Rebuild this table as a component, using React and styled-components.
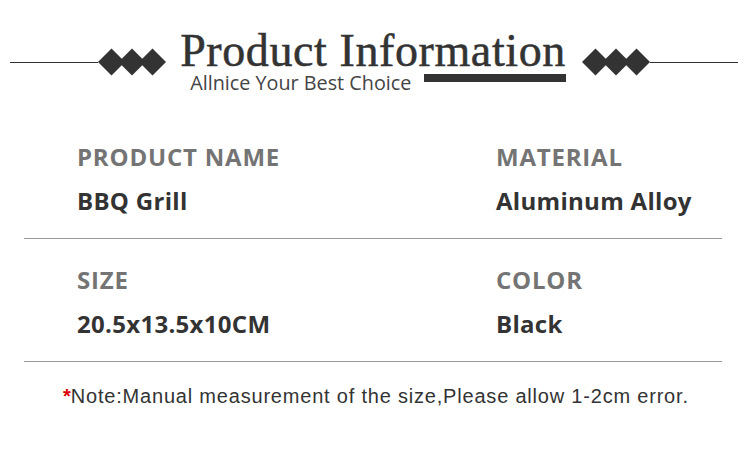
import React from "react";
import styled, { createGlobalStyle } from "styled-components";

const Global = createGlobalStyle`
  html, body {
    margin: 0;
    padding: 0;
    background: #fff;
  }
`;

const Page = styled.div`
  width: 750px;
  height: 449px;
  background: #fff;
  overflow: hidden;
`;

const Header = styled.header`
  display: flex;
  align-items: flex-start;
  padding: 30px 12px 0 10px;
  height: 102px;
  box-sizing: border-box;
`;

const Rule = styled.div`
  flex: 1 1 auto;
  height: 1px;
  margin-top: 32px;
  background: #333;
`;

const Diamonds = styled.svg`
  display: block;
  flex: 0 0 auto;
  margin: 18px ${(p) => (p.$side === "left" ? "14px 0 0" : "0 0 1px")};
`;

const TitleBlock = styled.div`
  display: flex;
  flex-direction: column;
  margin: 0 15px 0 0;
`;

const Title = styled.h1`
  margin: 0;
  font-family: "Liberation Serif", "Times New Roman", serif;
  font-weight: 400;
  font-size: 46px;
  line-height: 42px;
  letter-spacing: 0.6px;
  color: #333;
  -webkit-text-stroke: 0.5px #333;
  white-space: nowrap;
`;

const SubRow = styled.div`
  display: flex;
  align-items: flex-start;
  gap: 13px;
  padding-left: 10px;
`;

const Subtitle = styled.p`
  margin: 0;
  font-family: "Open Sans", "Noto Sans", sans-serif;
  font-size: 19.8px;
  line-height: 22px;
  color: #444;
  white-space: nowrap;
`;

const Bar = styled.div`
  flex: 1 1 auto;
  height: 8px;
  margin-top: 2px;
  background: #333;
`;

const Table = styled.section`
  margin: 0 28px 0 24px;
`;

const Row = styled.div`
  display: grid;
  grid-template-columns: 419px 1fr;
  padding: 39px 0 21px 53px;
  border-bottom: 1px solid #999;
  & + & {
    padding-top: 25px;
  }
`;

const Cell = styled.div`
  display: flex;
  flex-direction: column;
  gap: 12px;
`;

const Label = styled.div`
  font-family: "Open Sans", "Noto Sans", sans-serif;
  font-weight: 700;
  font-size: 24px;
  line-height: 32px;
  letter-spacing: 0.8px;
  color: #747474;
  white-space: nowrap;
`;

const Value = styled.div`
  font-family: "Open Sans", "Noto Sans", sans-serif;
  font-weight: 700;
  font-size: 24px;
  line-height: 32px;
  letter-spacing: 0.3px;
  color: #333;
  white-space: nowrap;
`;

const Note = styled.p`
  margin: 22px 0 0 63px;
  font-family: "Liberation Sans", Arial, sans-serif;
  font-size: 20px;
  line-height: 24px;
  letter-spacing: 0.8px;
  color: #333;
  white-space: nowrap;
`;

const Star = styled.span`
  color: #d00;
  font-weight: 700;
  letter-spacing: 0;
`;

const DiamondIcon = ({ side }) => (
  <Diamonds $side={side} width="68" height="28" viewBox="0 0 68 28">
    {[13.5, 34, 54.5].map((cx) => (
      <polygon
        key={cx}
        points={`${cx},0.5 ${cx + 13.5},14 ${cx},27.5 ${cx - 13.5},14`}
        fill="#333"
      />
    ))}
  </Diamonds>
);

const rows = [
  [
    ["PRODUCT NAME", "BBQ Grill"],
    ["MATERIAL", "Aluminum Alloy"],
  ],
  [
    ["SIZE", "20.5x13.5x10CM"],
    ["COLOR", "Black"],
  ],
];

const App = () => (
  <Page>
    <Global />
    <Header>
      <Rule />
      <DiamondIcon side="left" />
      <TitleBlock>
        <Title>Product Information</Title>
        <SubRow>
          <Subtitle>Allnice Your Best Choice</Subtitle>
          <Bar />
        </SubRow>
      </TitleBlock>
      <DiamondIcon side="right" />
      <Rule />
    </Header>
    <Table>
      {rows.map((row, i) => (
        <Row key={i}>
          {row.map(([label, value]) => (
            <Cell key={label}>
              <Label>{label}</Label>
              <Value>{value}</Value>
            </Cell>
          ))}
        </Row>
      ))}
    </Table>
    <Note>
      <Star>*</Star>Note:Manual measurement of the size,Please allow 1-2cm error.
    </Note>
  </Page>
);

export default App;
